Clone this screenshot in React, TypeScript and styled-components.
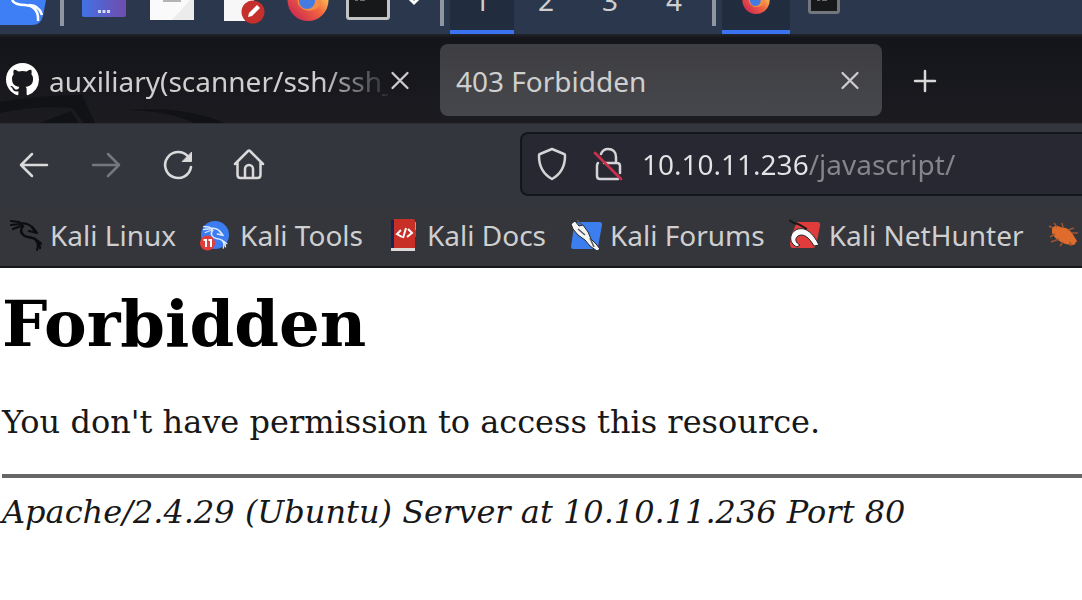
import React from "react";
import styled, { createGlobalStyle } from "styled-components";

const GlobalStyle = createGlobalStyle`
  * { box-sizing: border-box; }
  body { margin: 0; background: #ffffff; overflow: hidden; }
  button { border: 0; padding: 0; background: none; color: inherit; font: inherit; display: flex; align-items: center; justify-content: center; }
  svg { display: block; flex: none; }
`;

const Desktop = styled.div`
  font-family: "Noto Sans", sans-serif;
  font-size: 28px;
  color: #cfcfcf;
`;

const Panel = styled.header`
  display: flex;
  align-items: stretch;
  height: 34px;
  overflow: hidden;
  background: #2a374c;
`;

const Launcher = styled.button<{ $width: number; $active?: boolean }>`
  && {
    flex: none;
    width: ${(p) => p.$width}px;
    height: 34px;
    align-items: flex-start;
    background: ${(p) => (p.$active ? "#212c3e" : "transparent")};
    border-bottom: 4px solid ${(p) => (p.$active ? "#3b72f2" : "transparent")};
  }
`;

const Divider = styled.span<{ $before: number; $after: number }>`
  flex: none;
  width: 4px;
  height: 26px;
  margin: 0 ${(p) => p.$after}px 0 ${(p) => p.$before}px;
  background: #8f96a3;
`;

const Workspace = styled(Launcher)`
  && {
    align-items: flex-end;
    padding-bottom: 12px;
    font-size: 28px;
    line-height: 36px;
  }
`;

const TabBar = styled.div`
  position: relative;
  display: flex;
  align-items: center;
  height: 90px;
  padding-top: 2px;
  border-bottom: 1px solid #2b2b31;
  background: linear-gradient(#22252b, #14151a 4px, #1b1b20);
`;

const Backdrop = styled.svg`
  position: absolute;
  left: 0;
  bottom: 0;
`;

const Tab = styled.div<{ $active?: boolean }>`
  position: relative;
  display: flex;
  align-items: center;
  flex: none;
  width: ${(p) => (p.$active ? 442 : 440)}px;
  height: 72px;
  padding: ${(p) => (p.$active ? "0 20px 0 16px" : "0 28px 0 6px")};
  border-radius: 8px;
  background: ${(p) => (p.$active ? "linear-gradient(#3e3e42, #46474c)" : "transparent")};
`;

const TabTitle = styled.span<{ $fade?: boolean }>`
  flex: 1;
  min-width: 0;
  overflow: hidden;
  padding-top: 2px;
  white-space: nowrap;
  line-height: 40px;
  ${(p) =>
    p.$fade &&
    "margin-left: 10px; mask-image: linear-gradient(90deg, #000 272px, transparent 346px);"}
`;

const TabClose = styled.button`
  width: 24px;
  height: 24px;
`;

const NewTab = styled.button`
  width: 32px;
  height: 32px;
  margin-left: 27px;
  color: #d8d8d8;
`;

const Toolbar = styled.nav`
  display: flex;
  align-items: center;
  height: 80px;
  padding-left: 16px;
  background: #34363e;
`;

const ToolButton = styled.button<{ $dim?: boolean }>`
  width: 36px;
  height: 36px;
  margin: 2px 36px 0 0;
  color: #dadada;
  opacity: ${(p) => (p.$dim ? 0.4 : 1)};
`;

const AddressBar = styled.form`
  display: flex;
  align-items: center;
  flex: 1;
  height: 64px;
  margin: 0 -8px 0 216px;
  padding-left: 14px;
  border: 2px solid #15161b;
  border-radius: 8px;
  background: #272832;
  color: #d4d4d6;
`;

const IconSlot = styled.span<{ $width: number }>`
  flex: none;
  width: ${(p) => p.$width}px;
`;

const AddressInput = styled.input`
  flex: 1;
  min-width: 0;
  height: 44px;
  padding: 0;
  border: 0;
  outline: 0;
  font: inherit;
  color: transparent;
  background: linear-gradient(90deg, #e4e4e6 166px, #85868b 166px);
  background-clip: text;
  -webkit-background-clip: text;
`;

const Bookmarks = styled.nav`
  display: flex;
  align-items: center;
  gap: 24px;
  height: 64px;
  padding: 0 0 0 10px;
  overflow: hidden;
  border-bottom: 2px solid #17181b;
  background: #34363c;
`;

const Bookmark = styled.a`
  display: flex;
  align-items: center;
  flex: none;
  gap: 8px;
  color: inherit;
  text-decoration: none;
  white-space: nowrap;
  line-height: 40px;
`;

const Page = styled.main`
  padding: 20px 0 0 2px;
  font-family: "DejaVu Serif", serif;
  font-size: 32px;
  line-height: 40px;
  color: #000000;
`;

const Title = styled.h1`
  margin: 0;
  font-size: 64px;
  line-height: 72px;
`;

const Message = styled.p`
  margin: 42px 0 0;
  color: #181818;
`;

const Rule = styled.hr`
  margin: 32px 0 0;
  border: 0;
  height: 4px;
  background: #666666;
`;

const Signature = styled.address`
  margin-top: 14px;
  color: #181818;
`;

const Dragon = ({ color, width = 1 }: { color: string; width?: number }) => (
  <g fill="none" stroke={color} strokeLinecap="round" strokeLinejoin="round">
    <path strokeWidth={width * 2.2} d="M1 2l8 1 4 4M1 6l9-1M3 10l8-3M10 4q8 0 12 4l5 6-8-2" />
    <path strokeWidth={width * 2.5} d="M13 7c-4 5-1 10 5 11 7 1 11 3 12 11M22 8l3 4" />
    <path strokeWidth={width * 2} d="M26 22c3 2 2 5 1 9M28 22l4 3" />
  </g>
);

const CloseIcon = () => (
  <svg width="24" height="24" viewBox="0 0 24 24" fill="none" stroke="#cccccc" strokeWidth="2.3" strokeLinecap="round">
    <path d="M4.500 5l15 15M19.500 5l-15 15" />
  </svg>
);

const Terminal = ({ width, height, frame }: { width: number; height: number; frame: string }) => (
  <svg width={width} height={height} viewBox={`0 0 ${width} ${height}`}>
    <rect x="1.500" y="-12" width={width - 3} height={height + 10.5} rx="2" fill="#171819" stroke={frame} strokeWidth="3" />
    <path d="M9 0h3M14 0h5" stroke="#8b8b8b" strokeWidth="1.500" />
  </svg>
);

const FirefoxArt = () => (
  <>
    <circle cx="21" cy="20.500" r="20.500" fill="url(#foxpanel)" />
    <path d="M10 15h23q3 9-4 14-12 5-18-5z" fill="#f48c45" />
    <circle cx="20" cy="21" r="8" fill="#447be2" />
  </>
);

export default function App() {
  return (
    <Desktop>
      <GlobalStyle />
      <Panel>
        <Launcher $width={48} aria-label="Applications">
          <svg width="48" height="30" viewBox="0 0 48 30">
            <path d="M0 0h46l-3 16q-2 9-11 9H0z" fill="#3f7ff5" />
            <path d="M12 0q3 5 13 5 14 1 13 16M29 5q10 0 13 10" fill="none" stroke="#fff" strokeWidth="2.500" />
          </svg>
        </Launcher>
        <Divider $before={12} $after={8} />
        <Launcher $width={64} aria-label="Show desktop">
          <svg width="44" height="17" viewBox="0 0 44 17">
            <defs>
              <linearGradient id="desk"><stop stopColor="#4272e4" /><stop offset="1" stopColor="#704cad" /></linearGradient>
            </defs>
            <path d="M0 0h44v15q0 2-2 2H2q-2 0-2-2z" fill="url(#desk)" />
            <path d="M16 11.500h3M20.500 11.500h3M25 11.500h3" stroke="#d5daf7" strokeWidth="3" />
          </svg>
        </Launcher>
        <Launcher $width={72} aria-label="Files">
          <svg width="44" height="20" viewBox="0 0 44 20">
            <path d="M0 0h44v20H0z" fill="#fafafa" />
            <path d="M40 0h4v20H22z" fill="#ececec" />
            <path d="M13 0h18v2H13z" fill="#b4b4b4" />
          </svg>
        </Launcher>
        <Launcher $width={72} aria-label="Text editor">
          <svg width="44" height="24" viewBox="0 0 44 24">
            <path d="M2 0h30v21H2z" fill="#f7f7f7" />
            <circle cx="31" cy="12" r="11.500" fill="#c5302c" />
            <path d="M26 17l1-4 8-8 3 3-8 8z" fill="#fff" />
          </svg>
        </Launcher>
        <Launcher $width={56} aria-label="Firefox">
          <svg width="42" height="22" viewBox="0 20 42 22">
            <defs>
              <linearGradient id="foxpanel" x1="1" y1="0.3" x2="0.3" y2="1">
                <stop offset="0.1" stopColor="#f7c157" /><stop offset="0.5" stopColor="#f26440" /><stop offset="1" stopColor="#cf304f" />
              </linearGradient>
            </defs>
            <FirefoxArt />
          </svg>
        </Launcher>
        <Launcher $width={64} aria-label="Terminal"><Terminal width={44} height={20} frame="#c4c4c4" /></Launcher>
        <Launcher $width={28} aria-label="More terminals">
          <svg width="16" height="6" viewBox="0 0 16 6"><path d="M2-3l6 6 6-6" fill="none" stroke="#fff" strokeWidth="3" /></svg>
        </Launcher>
        <Divider $before={12} $after={6} />
        <Workspace $width={64} $active>1</Workspace>
        <Workspace $width={64}>2</Workspace>
        <Workspace $width={64}>3</Workspace>
        <Workspace $width={64}>4</Workspace>
        <Divider $before={6} $after={6} />
        <Launcher $width={68} $active aria-label="403 Forbidden window">
          <svg width="28" height="14" viewBox="0 20 42 21"><FirefoxArt /></svg>
        </Launcher>
        <Launcher $width={68} aria-label="Terminal window"><Terminal width={32} height={14} frame="#73777d" /></Launcher>
      </Panel>

      <TabBar>
        <Backdrop width="230" height="30" viewBox="0 0 230 30" aria-hidden="true">
          <path d="M0 9Q40 2 82 2l13 28H84L72 15Q35 12 0 20z" fill="#111216" />
          <path d="M40 30l31-12 8 12zM128 17q58-4 96 13h-30q-25-12-66-13z" fill="#111216" />
        </Backdrop>
        <Tab>
          <svg width="33" height="33" viewBox="0 0 16 16" fill="#ffffff">
            <path d="M8 0C3.580 0 0 3.580 0 8c0 3.540 2.290 6.530 5.470 7.590.4.070.55-.17.55-.38 0-.19-.01-.82-.01-1.490-2.010.37-2.530-.49-2.690-.94-.09-.23-.48-.94-.82-1.130-.28-.15-.68-.52-.01-.53.63-.01 1.080.58 1.230.82.72 1.210 1.870.87 2.330.66.07-.52.28-.87.51-1.070-1.780-.2-3.640-.89-3.640-3.950 0-.87.31-1.590.82-2.150-.08-.2-.36-1.020.08-2.120 0 0 .67-.21 2.200.82.64-.18 1.320-.27 2-.27s1.360.09 2 .27c1.530-1.040 2.200-.82 2.200-.82.44 1.100.16 1.920.08 2.120.51.56.82 1.270.82 2.150 0 3.070-1.870 3.750-3.650 3.950.29.25.54.73.54 1.480 0 1.070-.01 1.930-.01 2.200 0 .21.15.46.55.38A8.010 8.010 0 0 0 16 8c0-4.420-3.580-8-8-8z" />
          </svg>
          <TabTitle $fade>auxiliary(scanner/ssh/ssh_</TabTitle>
          <TabClose aria-label="Close tab"><CloseIcon /></TabClose>
        </Tab>
        <Tab $active>
          <TabTitle>403 Forbidden</TabTitle>
          <TabClose aria-label="Close tab"><CloseIcon /></TabClose>
        </Tab>
        <NewTab aria-label="New tab">
          <svg width="32" height="32" viewBox="0 0 32 32" stroke="currentColor" strokeWidth="2.500" strokeLinecap="round"><path d="M16 7v20M6 17h20" /></svg>
        </NewTab>
      </TabBar>

      <Toolbar>
        <ToolButton aria-label="Back">
          <svg width="36" height="36" viewBox="0 0 36 36" fill="none" stroke="currentColor" strokeWidth="2.500" strokeLinecap="round" strokeLinejoin="round"><path d="M31 18H5M16 7L5 18l11 11" /></svg>
        </ToolButton>
        <ToolButton aria-label="Forward" $dim>
          <svg width="36" height="36" viewBox="0 0 36 36" fill="none" stroke="currentColor" strokeWidth="2.500" strokeLinecap="round" strokeLinejoin="round"><path d="M5 18h26M20 7l11 11-11 11" /></svg>
        </ToolButton>
        <ToolButton aria-label="Reload">
          <svg width="36" height="36" viewBox="0 0 36 36" fill="none" stroke="currentColor" strokeWidth="2.600" strokeLinecap="round"><path d="M28 9.500A13 13 0 1 0 31 20" /><path d="M31.500 5.500v9h-9z" fill="currentColor" strokeWidth="1" strokeLinejoin="round" /></svg>
        </ToolButton>
        <ToolButton aria-label="Home">
          <svg width="36" height="36" viewBox="0 0 36 36" fill="none" stroke="currentColor" strokeWidth="2.500" strokeLinecap="round" strokeLinejoin="round"><path d="M3 17L16 4q1-1 2 0l13 13M5.500 15v13q0 3 3 3h17q3 0 3-3V15M13 31v-9a4 4 0 0 1 8 0v9" /></svg>
        </ToolButton>
        <AddressBar>
          <IconSlot $width={56}>
            <svg width="32" height="36" viewBox="0 0 32 36" fill="none" stroke="currentColor" strokeWidth="2.500" strokeLinejoin="round"><path d="M16 3l12 5q1 0 1 2c0 10-4 18-13 23C7 28 3 20 3 10q0-2 1-2z" /></svg>
          </IconSlot>
          <IconSlot $width={50}>
            <svg width="32" height="36" viewBox="0 0 32 36" fill="none" stroke="currentColor" strokeWidth="2.500" strokeLinecap="round"><path d="M9 8q2-5 7-5c5 0 8 3 8 8v6h1q3 0 3 3v7M12 17h12M6 17q-1 1-1 3v10q0 3 3 3h18" /><path d="M3 7l26 26" stroke="#c9304e" strokeWidth="2.800" /></svg>
          </IconSlot>
          <AddressInput aria-label="Address" defaultValue="10.10.11.236/javascript/" spellCheck={false} />
        </AddressBar>
      </Toolbar>

      <Bookmarks>
        <Bookmark href="#linux">
          <svg width="32" height="32" viewBox="0 0 32 32"><Dragon color="#0c0d0f" /></svg>
          Kali Linux
        </Bookmark>
        <Bookmark href="#tools">
          <svg width="32" height="32" viewBox="0 0 32 32">
            <circle cx="15" cy="16" r="14" fill="#3b7cf1" />
            <g transform="translate(3 6) scale(0.75)"><Dragon color="#dce9ff" width={0.8} /></g>
            <circle cx="7.500" cy="24" r="7.500" fill="#e33d3b" />
            <path d="M3.500 21H6v7M8.500 21H11v7" fill="none" stroke="#fff" strokeWidth="2" />
          </svg>
          Kali Tools
        </Bookmark>
        <Bookmark href="#docs">
          <svg width="32" height="32" viewBox="0 0 32 32">
            <path d="M4 1h4v28H4z" fill="#192357" /><path d="M7 0h19q2 0 2 2v27H7z" fill="#c83027" />
            <path d="M28 3h1v8h-1z" fill="#d99a26" /><path d="M28 11h1v7h-1z" fill="#257b55" /><path d="M4 29h24v3H4z" fill="#dedada" />
            <path d="M14 11l-4 4 5 3M21 10l4 4-5 4M19 9l-3 10" fill="none" stroke="#fff" strokeWidth="2" />
          </svg>
          Kali Docs
        </Bookmark>
        <Bookmark href="#forums">
          <svg width="32" height="32" viewBox="0 0 32 32">
            <path d="M8 3h22q2 0 2 3l-4 22q0 2-3 2H3q-2 0-2-2L4 7z" fill="#3d7eef" />
            <path d="M1 5l4-3 4 5 4-1 5 7 3 7 5 5 4 5-3 2-7-5-5-6-7-5-5-6z" fill="#f4f4f2" stroke="#25262a" />
            <path d="M7 1l5 5M8 10l7 6M20 19l4 9" stroke="#55565a" strokeWidth="1.500" />
          </svg>
          Kali Forums
        </Bookmark>
        <Bookmark href="#nethunter">
          <svg width="32" height="32" viewBox="0 0 32 32">
            <path d="M8 3h20q4 0 3 4l-4 20q-1 2-4 2H3q-2-1-2-4l1-8z" fill="#df3c3b" />
            <path d="M8 28C-1 24 0 13 9 10c8-2 15 4 21 16l-5 1C20 18 14 14 9 17c-4 3-2 7 2 9z" fill="#fafafa" stroke="#25262a" />
            <path d="M0 1l5 3 4 1 9 5" stroke="#17181a" strokeWidth="2" fill="none" />
          </svg>
          Kali NetHunter
        </Bookmark>
        <Bookmark href="#exploit-db">
          <svg width="32" height="32" viewBox="0 0 32 32">
            <path d="M4 9q4-4 8-1 8 0 12 6l5 8-3 4q-8 0-13-3-6-3-9-9z" fill="#df6c2c" />
            <path d="M9 8L6 4M15 9l-1-5M20 11l6-2M24 14l6 0M7 15l-5 3M11 20l-8 3M15 23l-3 4M22 23l1 4M5 9L1 7" stroke="#9e5430" strokeWidth="1.500" />
          </svg>
          Exploit-DB
        </Bookmark>
      </Bookmarks>

      <Page>
        <Title>Forbidden</Title>
        <Message>You don't have permission to access this resource.</Message>
        <Rule />
        <Signature>Apache/2.4.29 (Ubuntu) Server at 10.10.11.236 Port 80</Signature>
      </Page>
    </Desktop>
  );
}
